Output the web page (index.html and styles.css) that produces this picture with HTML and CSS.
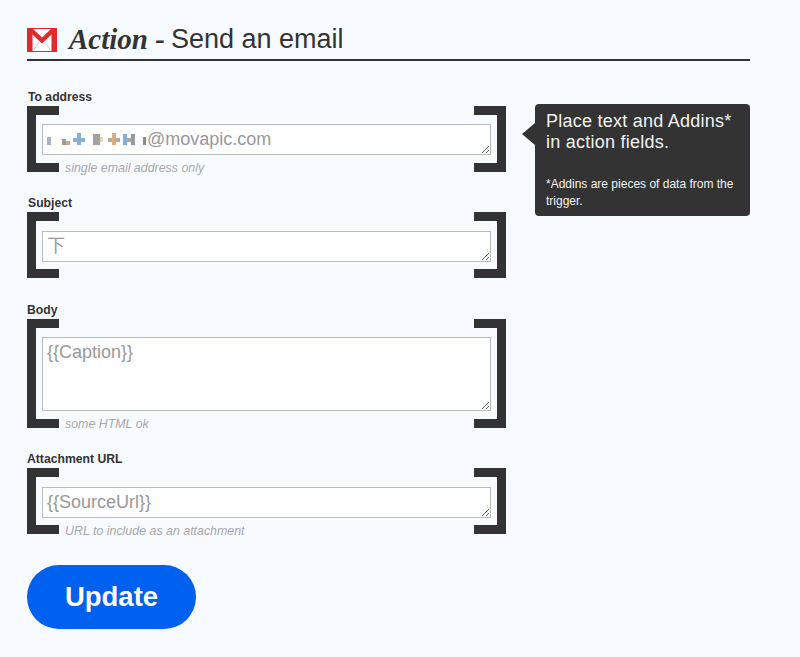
FILE: index.html
```html
<!DOCTYPE html>
<html>
<head>
<title>Action - Send an email</title>
<link rel="stylesheet" href="styles.css">
</head>
<body>
<div class="page">
  <h1 class="page-title">
    <svg class="gmail-icon" viewBox="0 0 30 24" width="30" height="24">
      <rect width="30" height="24" fill="#e0292b"/>
      <polygon points="6,1 24,1 15,9.500" fill="#fff"/>
      <polygon points="5.500,6.500 15,15.500 24.500,6.500 24.500,23 5.500,23" fill="#fff"/>
      <path d="M6 23 L12.500 13.500 M24 23 L17.500 13.500" stroke="#d4d4d4" stroke-width="1" fill="none"/>
    </svg>
    <em class="page-title_action">Action -</em>
    <span class="page-title_name">Send an email</span>
  </h1>

  <div class="content">
    <form class="action-form">
      <label class="field-label field-label_inset">To address</label>
      <div class="field">
        <textarea class="field-input field-input_address" rows="1">@movapic.com</textarea>
        <svg class="address-mosaic" viewBox="0 0 100 13" width="100" height="13">
          <rect x="0" y="4" width="4" height="8" fill="#a9b4c6"/>
          <rect x="15" y="6" width="4" height="6" fill="#a89c94"/>
          <rect x="19" y="8" width="4" height="4" fill="#b9aca4"/>
          <rect x="26" y="5" width="12" height="4" fill="#86aed0"/>
          <rect x="30" y="0" width="4" height="12" fill="#86aed0"/>
          <rect x="46" y="1" width="7" height="11" fill="#a5a19e"/>
          <rect x="53" y="4" width="3" height="5" fill="#e8d2b0"/>
          <rect x="61" y="5" width="12" height="4" fill="#b8a898"/>
          <rect x="65" y="0" width="4" height="12" fill="#d8ae82"/>
          <rect x="76" y="1" width="4" height="11" fill="#84aed4"/>
          <rect x="80" y="5" width="4" height="4" fill="#a7a7a7"/>
          <rect x="84" y="1" width="4" height="11" fill="#9a9a9e"/>
          <rect x="96" y="4" width="3" height="8" fill="#8c8c8c"/>
        </svg>
        <div class="field-hint">single email address only</div>
      </div>

      <label class="field-label field-label_inset">Subject</label>
      <div class="field field_low field_spaced">
        <textarea class="field-input field-input_cjk" rows="1">下</textarea>
      </div>

      <label class="field-label">Body</label>
      <div class="field">
        <textarea class="field-input field-input_tall">{{Caption}}</textarea>
        <div class="field-hint">some HTML ok</div>
      </div>

      <label class="field-label">Attachment URL</label>
      <div class="field field_low">
        <textarea class="field-input" rows="1">{{SourceUrl}}</textarea>
        <div class="field-hint">URL to include as an attachment</div>
      </div>

      <button class="update-btn" type="button">Update</button>
    </form>

    <div class="tip">
      <p class="tip-main">Place text and Addins*<br>in action fields.</p>
      <p class="tip-note">*Addins are pieces of data from the trigger.</p>
    </div>
  </div>
</div>
</body>
</html>
```

FILE: styles.css
```css
html,
body {
  margin: 0;
  background-color: #f7fbff;
}

body {
  font-family: "Liberation Sans", Arial, sans-serif;
  color: #333;
}

.page {
  width: 723px;
  padding: 22px 0 0 27px;
}

.page-title {
  display: flex;
  align-items: center;
  height: 35px;
  margin: 0;
  padding-bottom: 2px;
  border-bottom: 2px solid #333;
  font-weight: normal;
}

.gmail-icon {
  margin-right: 12px;
}

.page-title_action {
  margin-right: 6px;
  font-family: "Liberation Serif", "Times New Roman", serif;
  font-weight: bold;
  font-size: 29px;
}

.page-title_name {
  font-size: 27px;
}

.content {
  display: flex;
  align-items: flex-start;
  gap: 29px;
}

.action-form {
  width: 479px;
  padding-top: 29px;
}

.field-label {
  display: block;
  height: 16px;
  line-height: 15px;
  font-weight: bold;
  font-size: 12.2px;
}

.field-label_inset {
  padding-left: 1px;
}

.field {
  position: relative;
  margin-bottom: 24px;
  padding: 18px 15px 17px;
}

.field_low {
  padding: 19px 15px 16px;
}

.field_spaced {
  margin-bottom: 25px;
}

/* the two brackets round each input */
.field:before,
.field:after {
  content: "";
  position: absolute;
  top: 0;
  bottom: 0;
  width: 23px;
  border: 9px solid #333;
}

.field:before {
  left: 0;
  border-right: 0;
}

.field:after {
  right: 0;
  border-left: 0;
}

.field-input {
  display: block;
  position: relative;
  z-index: 1;
  box-sizing: border-box;
  width: 100%;
  height: 31px;
  margin: 0;
  padding: 3px 4px;
  border: 1px solid #bbb;
  border-radius: 0;
  background-color: #fff;
  font-family: "Liberation Sans", Arial, sans-serif;
  font-size: 18px;
  line-height: 22px;
  color: #999;
  outline: none;
}

.field-input_tall {
  height: 74px;
}

.field-input_address {
  padding-left: 104px;
}

.field-input_cjk {
  font-family: "Liberation Sans", "Noto Sans CJK JP", sans-serif;
}

.address-mosaic {
  position: absolute;
  z-index: 2;
  top: 27px;
  left: 20px;
}

.field-hint {
  position: relative;
  z-index: 1;
  margin: 6px 0 -20px 23px;
  line-height: 14px;
  font-style: italic;
  font-size: 12.400px;
  color: #a8a8a8;
}

.update-btn {
  display: block;
  width: 169px;
  height: 64px;
  margin-top: 31px;
  padding: 0;
  border: 0;
  border-radius: 32px;
  background-color: #0060f0;
  font-family: "Liberation Sans", Arial, sans-serif;
  font-weight: bold;
  font-size: 27.500px;
  color: #fff;
}

.tip {
  position: relative;
  width: 215px;
  box-sizing: border-box;
  margin-top: 43px;
  padding: 7px 11px;
  border-radius: 4px;
  background-color: #333;
  color: #f2f2f2;
}

/* little arrow pointing at the first field */
.tip:before {
  content: "";
  position: absolute;
  top: 19px;
  left: -13px;
  border-top: 11px solid transparent;
  border-bottom: 11px solid transparent;
  border-right: 13px solid #333;
}

.tip-main {
  margin: 0 0 23px;
  font-size: 18px;
  letter-spacing: .25px;
  line-height: 21px;
}

.tip-note {
  margin: 0;
  font-size: 12px;
  line-height: 16.500px;
}
```
